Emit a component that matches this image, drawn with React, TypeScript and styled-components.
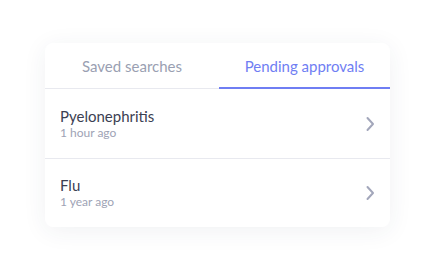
import styled, { createGlobalStyle } from 'styled-components';

const GlobalStyle = createGlobalStyle`
  body {
    margin: 0;
    background: #fff;
    font-family: Lato, "Noto Sans", sans-serif;
  }
`;

const Page = styled.div`
  width: 435px;
  height: 274px;
  padding: 43px 0 0 45px;
  box-sizing: border-box;
`;

const Card = styled.div`
  width: 345px;
  height: 184px;
  background: #fff;
  border-radius: 8px;
  box-shadow: 0 4px 24px rgba(40, 50, 90, 0.07);
  overflow: hidden;
`;

const Tabs = styled.div`
  display: grid;
  grid-template-columns: 174px 1fr;
  border-bottom: 1px solid #e8e9ef;
  height: 46px;
  box-sizing: border-box;
`;

const Tab = styled.div<{ $active?: boolean }>`
  display: flex;
  align-items: center;
  justify-content: center;
  font-size: 15px;
  padding-top: 1px;
  color: ${p => (p.$active ? '#6f7ef3' : '#9a9fb2')};
  border-bottom: 2px solid ${p => (p.$active ? '#6f7ef3' : 'transparent')};
  margin-bottom: -1px;
`;

const Row = styled.div<{ $last?: boolean }>`
  display: flex;
  align-items: center;
  justify-content: space-between;
  height: ${p => (p.$last ? '67px' : '69px')};
  padding: 0 15px 0 15px;
  border-bottom: ${p => (p.$last ? 'none' : '1px solid #e8e9ef')};
`;

const Title = styled.div`
  font-size: 15px;
  color: #3b4052;
  line-height: 18px;
`;

const Sub = styled.div`
  font-size: 12px;
  color: #9ea3b5;
  line-height: 14px;
  margin-top: 1px;
`;

const Chevron = () => (
  <svg width="10" height="16" viewBox="0 0 10 16">
    <path d="M2.5 2 L8 8 L2.5 14" fill="none" stroke="#a3a7bb" strokeWidth="2" strokeLinecap="round" strokeLinejoin="round" />
  </svg>
);

const items = [
  { title: 'Pyelonephritis', time: '1 hour ago' },
  { title: 'Flu', time: '1 year ago' },
];

export default function App() {
  return (
    <Page>
      <GlobalStyle />
      <Card>
        <Tabs>
          <Tab>Saved searches</Tab>
          <Tab $active>Pending approvals</Tab>
        </Tabs>
        {items.map((it, i) => (
          <Row key={it.title} $last={i === items.length - 1}>
            <div>
              <Title>{it.title}</Title>
              <Sub>{it.time}</Sub>
            </div>
            <Chevron />
          </Row>
        ))}
      </Card>
    </Page>
  );
}
